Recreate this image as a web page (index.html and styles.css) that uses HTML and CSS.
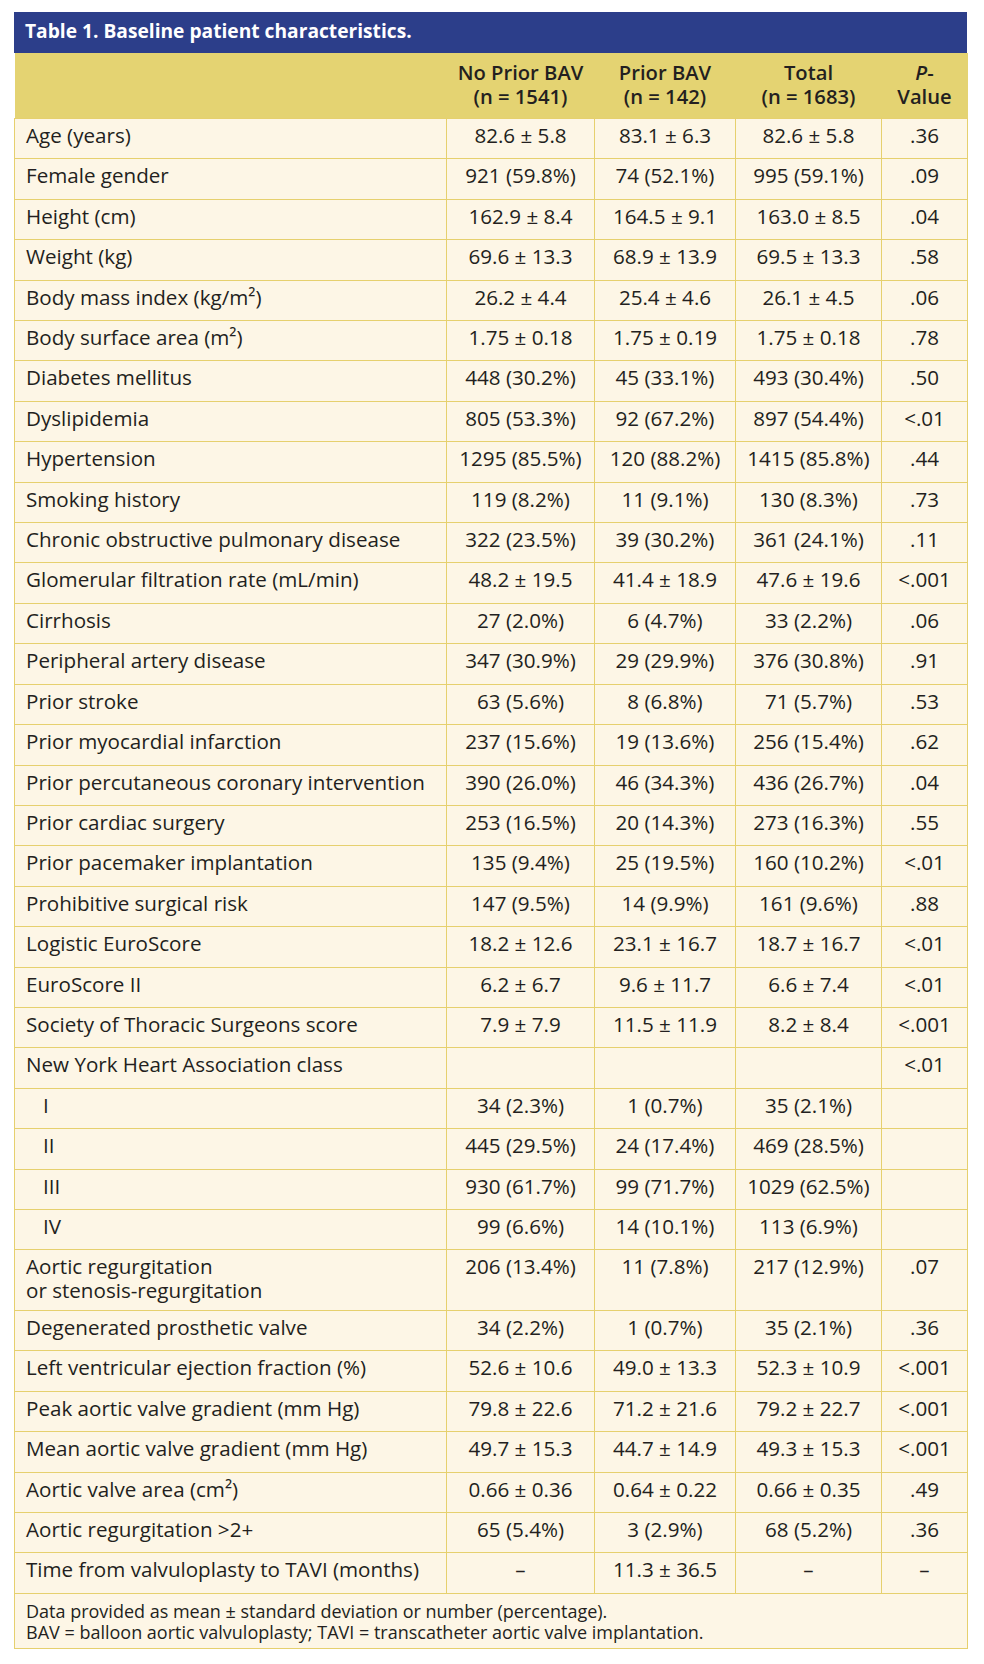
FILE: index.html
```html
<!DOCTYPE html>
<html lang="en">
<head>
<meta charset="utf-8">
<title>Table 1. Baseline patient characteristics.</title>
<link rel="stylesheet" href="styles.css">
</head>
<body>
<div class="wrap">
  <div class="title">Table 1. Baseline patient characteristics.</div>
  <table class="tbl">
    <colgroup>
      <col class="c1"><col class="c2"><col class="c3"><col class="c4"><col class="c5">
    </colgroup>
    <thead>
      <tr class="head">
        <th></th>
        <th>No Prior BAV<br>(n = 1541)</th>
        <th>Prior BAV<br>(n = 142)</th>
        <th>Total<br>(n = 1683)</th>
        <th><i>P</i>-<br>Value</th>
      </tr>
    </thead>
    <tbody>
      <tr class="r"><td>Age (years)</td><td>82.6 ± 5.8</td><td>83.1 ± 6.3</td><td>82.6 ± 5.8</td><td>.36</td></tr>
      <tr class="r"><td>Female gender</td><td>921 (59.8%)</td><td>74 (52.1%)</td><td>995 (59.1%)</td><td>.09</td></tr>
      <tr class="r"><td>Height (cm)</td><td>162.9 ± 8.4</td><td>164.5 ± 9.1</td><td>163.0 ± 8.5</td><td>.04</td></tr>
      <tr class="r"><td>Weight (kg)</td><td>69.6 ± 13.3</td><td>68.9 ± 13.9</td><td>69.5 ± 13.3</td><td>.58</td></tr>
      <tr class="r"><td>Body mass index (kg/m²)</td><td>26.2 ± 4.4</td><td>25.4 ± 4.6</td><td>26.1 ± 4.5</td><td>.06</td></tr>
      <tr class="r"><td>Body surface area (m²)</td><td>1.75 ± 0.18</td><td>1.75 ± 0.19</td><td>1.75 ± 0.18</td><td>.78</td></tr>
      <tr class="r"><td>Diabetes mellitus</td><td>448 (30.2%)</td><td>45 (33.1%)</td><td>493 (30.4%)</td><td>.50</td></tr>
      <tr class="r"><td>Dyslipidemia</td><td>805 (53.3%)</td><td>92 (67.2%)</td><td>897 (54.4%)</td><td>&lt;.01</td></tr>
      <tr class="r"><td>Hypertension</td><td>1295 (85.5%)</td><td>120 (88.2%)</td><td>1415 (85.8%)</td><td>.44</td></tr>
      <tr class="r"><td>Smoking history</td><td>119 (8.2%)</td><td>11 (9.1%)</td><td>130 (8.3%)</td><td>.73</td></tr>
      <tr class="r"><td>Chronic obstructive pulmonary disease</td><td>322 (23.5%)</td><td>39 (30.2%)</td><td>361 (24.1%)</td><td>.11</td></tr>
      <tr class="r"><td>Glomerular filtration rate (mL/min)</td><td>48.2 ± 19.5</td><td>41.4 ± 18.9</td><td>47.6 ± 19.6</td><td>&lt;.001</td></tr>
      <tr class="r"><td>Cirrhosis</td><td>27 (2.0%)</td><td>6 (4.7%)</td><td>33 (2.2%)</td><td>.06</td></tr>
      <tr class="r"><td>Peripheral artery disease</td><td>347 (30.9%)</td><td>29 (29.9%)</td><td>376 (30.8%)</td><td>.91</td></tr>
      <tr class="r"><td>Prior stroke</td><td>63 (5.6%)</td><td>8 (6.8%)</td><td>71 (5.7%)</td><td>.53</td></tr>
      <tr class="r"><td>Prior myocardial infarction</td><td>237 (15.6%)</td><td>19 (13.6%)</td><td>256 (15.4%)</td><td>.62</td></tr>
      <tr class="r"><td>Prior percutaneous coronary intervention</td><td>390 (26.0%)</td><td>46 (34.3%)</td><td>436 (26.7%)</td><td>.04</td></tr>
      <tr class="r"><td>Prior cardiac surgery</td><td>253 (16.5%)</td><td>20 (14.3%)</td><td>273 (16.3%)</td><td>.55</td></tr>
      <tr class="r"><td>Prior pacemaker implantation</td><td>135 (9.4%)</td><td>25 (19.5%)</td><td>160 (10.2%)</td><td>&lt;.01</td></tr>
      <tr class="r"><td>Prohibitive surgical risk</td><td>147 (9.5%)</td><td>14 (9.9%)</td><td>161 (9.6%)</td><td>.88</td></tr>
      <tr class="r"><td>Logistic EuroScore</td><td>18.2 ± 12.6</td><td>23.1 ± 16.7</td><td>18.7 ± 16.7</td><td>&lt;.01</td></tr>
      <tr class="r"><td>EuroScore II</td><td>6.2 ± 6.7</td><td>9.6 ± 11.7</td><td>6.6 ± 7.4</td><td>&lt;.01</td></tr>
      <tr class="r"><td>Society of Thoracic Surgeons score</td><td>7.9 ± 7.9</td><td>11.5 ± 11.9</td><td>8.2 ± 8.4</td><td>&lt;.001</td></tr>
      <tr class="r"><td>New York Heart Association class</td><td></td><td></td><td></td><td>&lt;.01</td></tr>
      <tr class="r"><td class="sub">I</td><td>34 (2.3%)</td><td>1 (0.7%)</td><td>35 (2.1%)</td><td></td></tr>
      <tr class="r"><td class="sub">II</td><td>445 (29.5%)</td><td>24 (17.4%)</td><td>469 (28.5%)</td><td></td></tr>
      <tr class="r"><td class="sub">III</td><td>930 (61.7%)</td><td>99 (71.7%)</td><td>1029 (62.5%)</td><td></td></tr>
      <tr class="r"><td class="sub">IV</td><td>99 (6.6%)</td><td>14 (10.1%)</td><td>113 (6.9%)</td><td></td></tr>
      <tr class="r2"><td>Aortic regurgitation<br>or stenosis-regurgitation</td><td>206 (13.4%)</td><td>11 (7.8%)</td><td>217 (12.9%)</td><td>.07</td></tr>
      <tr class="r"><td>Degenerated prosthetic valve</td><td>34 (2.2%)</td><td>1 (0.7%)</td><td>35 (2.1%)</td><td>.36</td></tr>
      <tr class="r"><td>Left ventricular ejection fraction (%)</td><td>52.6 ± 10.6</td><td>49.0 ± 13.3</td><td>52.3 ± 10.9</td><td>&lt;.001</td></tr>
      <tr class="r"><td>Peak aortic valve gradient (mm Hg)</td><td>79.8 ± 22.6</td><td>71.2 ± 21.6</td><td>79.2 ± 22.7</td><td>&lt;.001</td></tr>
      <tr class="r"><td>Mean aortic valve gradient (mm Hg)</td><td>49.7 ± 15.3</td><td>44.7 ± 14.9</td><td>49.3 ± 15.3</td><td>&lt;.001</td></tr>
      <tr class="r"><td>Aortic valve area (cm²)</td><td>0.66 ± 0.36</td><td>0.64 ± 0.22</td><td>0.66 ± 0.35</td><td>.49</td></tr>
      <tr class="r"><td>Aortic regurgitation &gt;2+</td><td>65 (5.4%)</td><td>3 (2.9%)</td><td>68 (5.2%)</td><td>.36</td></tr>
      <tr class="r"><td>Time from valvuloplasty to TAVI (months)</td><td>–</td><td>11.3 ± 36.5</td><td>–</td><td>–</td></tr>
    </tbody>
    <tfoot>
      <tr class="foot"><td colspan="5">Data provided as mean ± standard deviation or number (percentage).<br>BAV = balloon aortic valvuloplasty; TAVI = transcatheter aortic valve implantation.</td></tr>
    </tfoot>
  </table>
</div>
</body>
</html>
```

FILE: styles.css
```css
html, body {
  margin: 0;
  padding: 0;
  background: #ffffff;
}

body {
  font-family: "Open Sans", Lato, "Liberation Sans", sans-serif;
  color: #231f20;
}

.wrap {
  width: 953px;
  margin: 12px 0 0 14px;
}

.title {
  background: #2c3e8a;
  color: #ffffff;
  font-weight: 700;
  font-size: 19.2px;
  line-height: 24px;
  height: 41px;
  box-sizing: border-box;
  padding: 7px 11px 0;
}

.tbl {
  width: 953px;
  border-collapse: collapse;
  table-layout: fixed;
  font-size: 20.6px;
  line-height: 24px;
}

.c1 { width: 432px; }
.c2 { width: 148px; }
.c3 { width: 141px; }
.c4 { width: 146px; }
.c5 { width: 86px; }

.head th {
  background: #e4d372;
  font-weight: 600;
  font-size: 20.2px;
  line-height: 24px;
  height: 61px;
  padding: 0 4px 4px;
  text-align: center;
  vertical-align: middle;
  border: none;
}

.head th i {
  font-style: italic;
}

.tbl tbody td {
  background: #fdf6e6;
  border: 1px solid #e6d06e;
  padding: 4px 11px 0;
  vertical-align: top;
  text-align: center;
  white-space: nowrap;
}

.tbl tbody td:first-child {
  text-align: left;
}

.tbl tbody td.sub {
  padding-left: 28px;
}

.r { height: 40.42px; }
.r2 { height: 60.5px; }

.foot td {
  background: #fdf6e6;
  border: 1px solid #e6d06e;
  font-size: 18px;
  line-height: 21px;
  padding: 7px 11px 5px;
  text-align: left;
}
```
